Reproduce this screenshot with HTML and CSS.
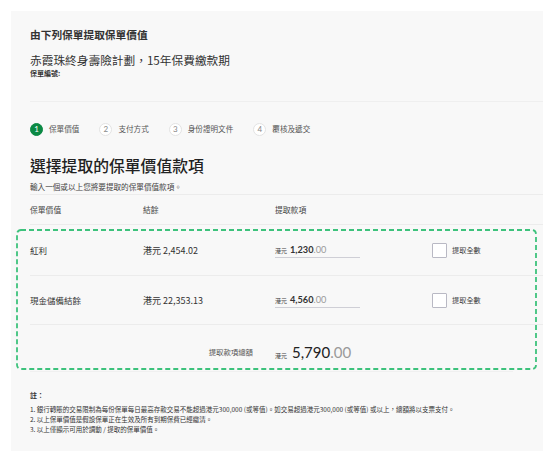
FILE: index.html
```html
<!DOCTYPE html>
<html lang="zh-Hant">
<head>
<meta charset="utf-8">
<link rel="stylesheet" href="styles.css">
</head>
<body>
<div class="panel">
  <div class="header">
    <div class="title">由下列保單提取保單價值</div>
    <div class="plan">赤霞珠終身壽險計劃，15年保費繳款期</div>
    <div class="policy-no">保單編號:</div>
  </div>

  <div class="steps">
    <div class="step active"><span class="circle">1</span><span class="label">保單價值</span></div>
    <div class="step"><span class="circle">2</span><span class="label">支付方式</span></div>
    <div class="step"><span class="circle">3</span><span class="label">身份證明文件</span></div>
    <div class="step"><span class="circle">4</span><span class="label">覆核及遞交</span></div>
  </div>

  <h1 class="heading">選擇提取的保單價值款項</h1>
  <div class="subtitle">輸入一個或以上您將要提取的保單價值款項。</div>

  <div class="row head">
    <div>保單價值</div>
    <div>結餘</div>
    <div>提取款項</div>
    <div></div>
  </div>

  <div class="items">
    <div class="row item first">
      <div class="name">紅利</div>
      <div class="balance">港元 2,454.02</div>
      <div class="input"><span class="cur">港元</span><span class="int">1,230</span><span class="dec">.00</span></div>
      <div class="check"><span class="box"></span><span class="check-label">提取全數</span></div>
    </div>
    <div class="row item second">
      <div class="name">現金儲備結餘</div>
      <div class="balance">港元 22,353.13</div>
      <div class="input"><span class="cur">港元</span><span class="int">4,560</span><span class="dec">.00</span></div>
      <div class="check"><span class="box"></span><span class="check-label">提取全數</span></div>
    </div>
    <div class="row total">
      <div class="total-label">提取款項總額</div>
      <div class="total-amount"><span class="cur">港元</span><span class="int">5,790</span><span class="dec">.00</span></div>
      <div></div>
    </div>
    <svg class="highlight" width="521" height="141" viewBox="0 0 521 141">
      <rect x="1" y="1" width="519" height="139" rx="4" ry="4" fill="none" stroke="#3dc27c" stroke-width="1.8" stroke-dasharray="5 3"/>
    </svg>
  </div>

  <div class="notes">
    <div class="notes-title">註：</div>
    <ol class="notes-list">
      <li>1. 銀行轉賬的交易限制為每份保單每日最高存款交易不能超過港元300,000 (或等值)。如交易超過港元300,000 (或等值) 或以上，總額將以支票支付。</li>
      <li>2. 以上保單價值是假設保單正在生效及所有到期保費已經繳清。</li>
      <li>3. 以上僅顯示可用於調動 / 提取的保單價值。</li>
    </ol>
  </div>
</div>
</body>
</html>
```

FILE: styles.css
```css
* { box-sizing: border-box; }

html, body {
  margin: 0;
  padding: 0;
  background: #ffffff;
}

body {
  font-family: "Noto Sans CJK TC", "Noto Sans", sans-serif;
  color: #333333;
}

.panel {
  margin: 11px 11px 10px 11px;
  height: 440px;
  background: #f8f8f8;
  padding-left: 19px;
}

.header {
  padding-top: 16px;
  padding-bottom: 24px;
  border-bottom: 1px solid #efefef;
}

.title {
  font-size: 10.7px;
  line-height: 16px;
  font-weight: 700;
  color: #333;
}

.plan {
  margin-top: 10px;
  font-size: 11.7px;
  line-height: 14px;
  color: #333;
}

.policy-no {
  margin-top: 2px;
  font-size: 7px;
  line-height: 8px;
  font-weight: 700;
  color: #333;
}

.steps {
  display: flex;
  margin-top: 20px;
  height: 14px;
  align-items: center;
  gap: 20px;
}

.step {
  display: flex;
  align-items: center;
  gap: 6px;
}

.circle {
  width: 13px;
  height: 13px;
  border-radius: 50%;
  border: 1px solid #e3e3e3;
  background: #fff;
  color: #888;
  font-family: "Lato", sans-serif;
  font-size: 8px;
  display: flex;
  align-items: center;
  justify-content: center;
}

.step.active .circle {
  background: #0b8944;
  border-color: #0b8944;
  color: #fff;
}

.label {
  font-size: 7.6px;
  line-height: 10px;
  color: #555;
}

.heading {
  margin: 18px 0 0 0;
  font-size: 15.8px;
  line-height: 24px;
  font-weight: 500;
  color: #222;
}

.subtitle {
  margin-top: 4px;
  font-size: 7.6px;
  line-height: 10px;
  color: #444;
  padding-bottom: 2px;
  border-bottom: 1px solid #ececec;
}

.row {
  display: grid;
  grid-template-columns: 113px 132px 157px 1fr;
  align-items: center;
}

.row.head {
  height: 30px;
  font-size: 7.8px;
  color: #444;
  border-bottom: 1px solid #ececec;
}

.items {
  position: relative;
}

.highlight {
  position: absolute;
  left: -14px;
  top: 4px;
}

.row.item {
  border-bottom: 1px solid #ececec;
}

.row.item.first { height: 51px; }
.row.item.second { height: 49px; }

.name {
  font-size: 8.5px;
  color: #333;
}

.balance {
  font-size: 9px;
  color: #333;
}

.input {
  width: 85px;
  height: 14px;
  border-bottom: 1px solid #cfcfd6;
  display: flex;
  align-items: baseline;
  margin-top: 2px;
}

.cur {
  font-size: 6px;
  color: #444;
  margin-right: 3px;
}

.int {
  font-family: "Lato", sans-serif;
  font-weight: 700;
  font-size: 9.2px;
  color: #333;
}

.dec {
  font-family: "Lato", sans-serif;
  font-size: 9.2px;
  color: #9a9a9a;
}

.check {
  display: flex;
  align-items: center;
  gap: 5px;
}

.box {
  width: 15px;
  height: 15px;
  border: 1.5px solid #b9b9c4;
  background: #fff;
  border-radius: 1px;
}

.check-label {
  font-size: 7.2px;
  color: #444;
}

.row.total {
  grid-template-columns: 223px 1fr 1fr;
  column-gap: 22px;
  height: 47px;
  padding-top: 7px;
  border-bottom: 1px solid #f0f0f0;
  margin-right: 30px;
}

.total-label {
  text-align: right;
  font-size: 7.4px;
  color: #555;
}

.total-amount {
  display: flex;
  align-items: baseline;
}

.total-amount .cur {
  font-size: 6px;
  margin-right: 5px;
}

.total-amount .int {
  font-weight: 400;
  font-size: 15px;
  color: #222;
}

.total-amount .dec {
  font-size: 15px;
  color: #9a9a9a;
}

.notes {
  padding-top: 18px;
}

.notes-title {
  font-size: 7px;
  line-height: 10px;
  font-weight: 700;
  color: #333;
}

.notes-list {
  list-style: none;
  margin: 4px 0 0 0;
  padding: 0;
}

.notes-list li {
  font-size: 6.5px;
  line-height: 10px;
  color: #333;
}
```
